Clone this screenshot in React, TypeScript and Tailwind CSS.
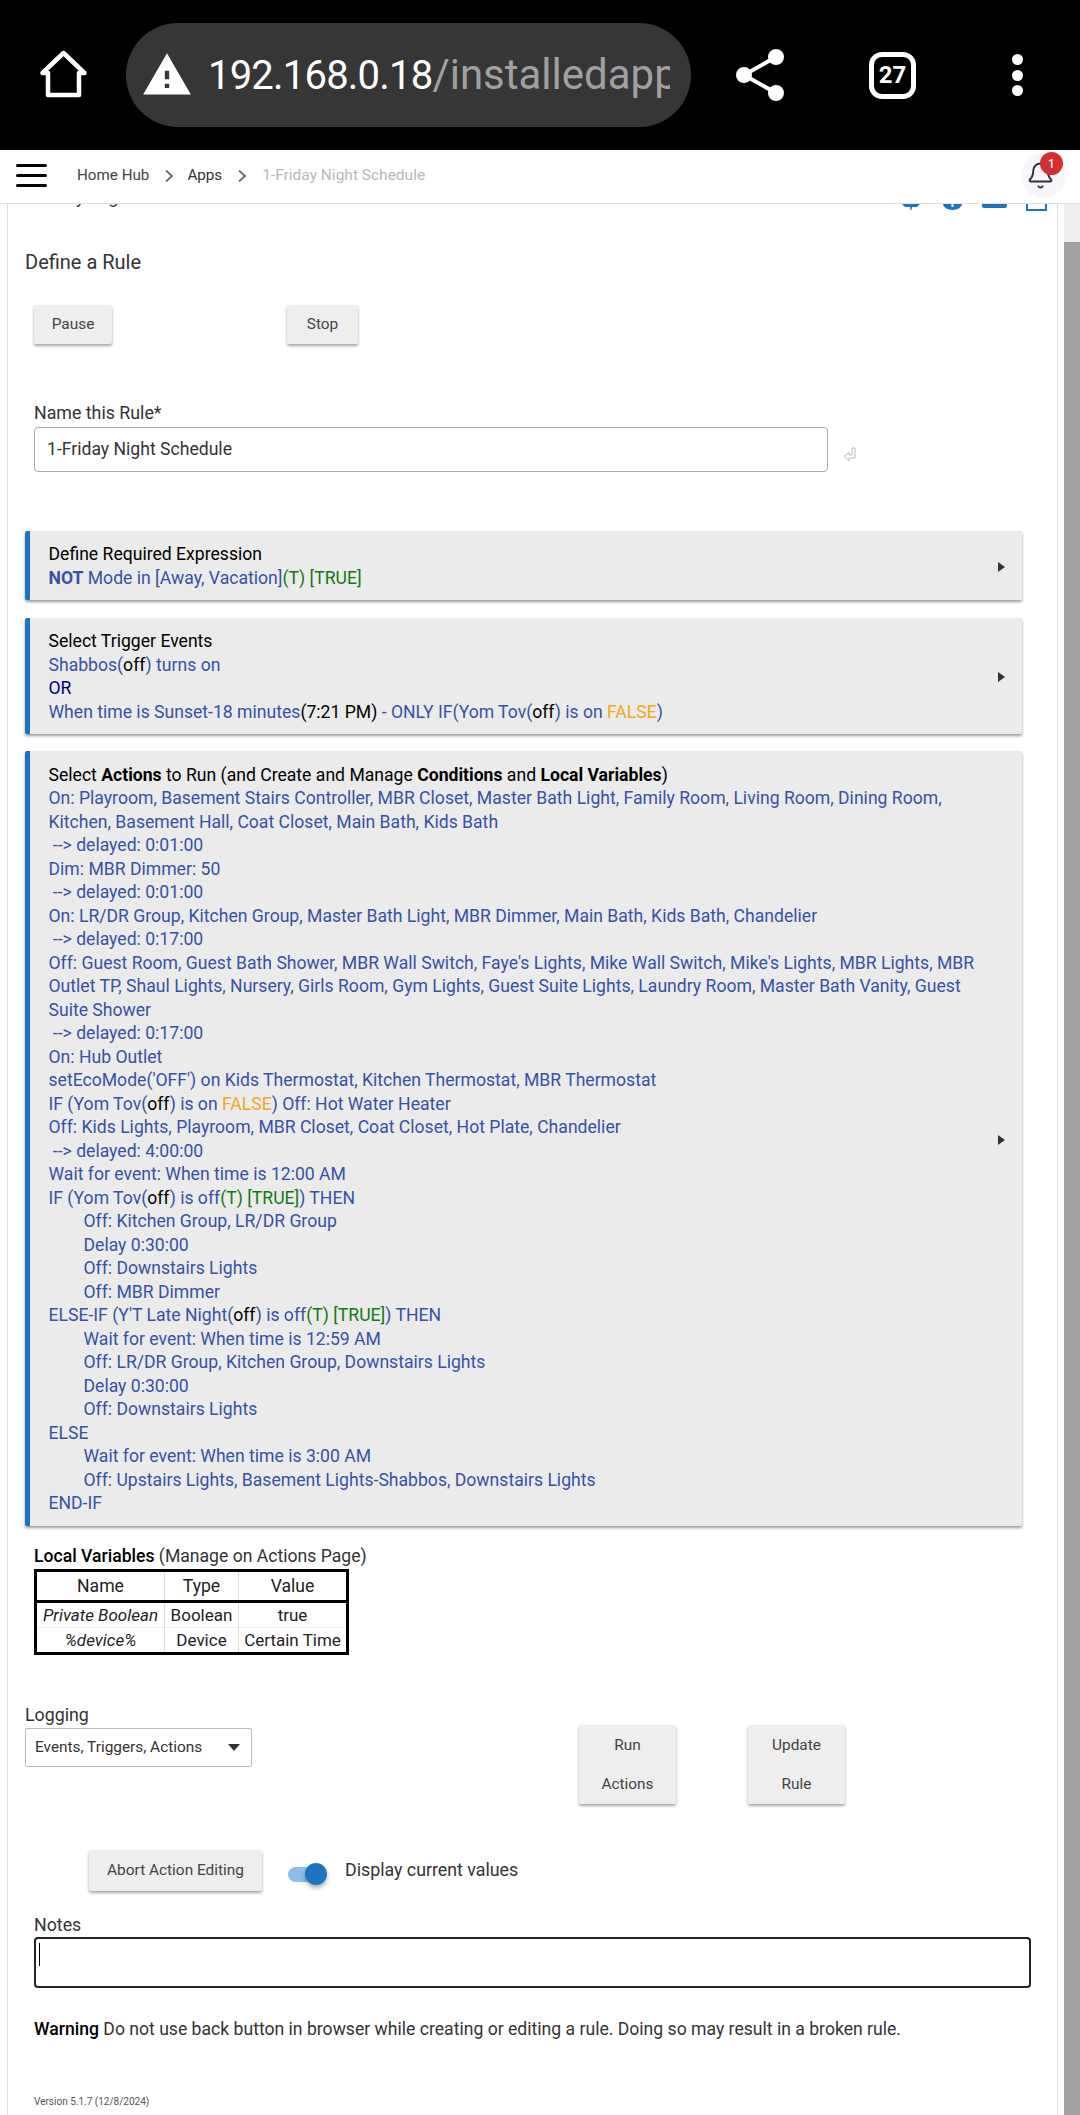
import React from 'react';
import { Bell } from 'lucide-react';

const Off = () => <span className="text-black">off</span>;
const T = ({ children }: { children: React.ReactNode }) => <span className="text-[#0f7a0f]">{children}</span>;
const False = () => <span className="text-[#f5a623]">FALSE</span>;

const actionLines: React.ReactNode[] = [
  'On: Playroom, Basement Stairs Controller, MBR Closet, Master Bath Light, Family Room, Living Room, Dining Room,',
  'Kitchen, Basement Hall, Coat Closet, Main Bath, Kids Bath',
  '\u00a0--> delayed: 0:01:00',
  'Dim: MBR Dimmer: 50',
  '\u00a0--> delayed: 0:01:00',
  'On: LR/DR Group, Kitchen Group, Master Bath Light, MBR Dimmer, Main Bath, Kids Bath, Chandelier',
  '\u00a0--> delayed: 0:17:00',
  "Off: Guest Room, Guest Bath Shower, MBR Wall Switch, Faye's Lights, Mike Wall Switch, Mike's Lights, MBR Lights, MBR",
  'Outlet TP, Shaul Lights, Nursery, Girls Room, Gym Lights, Guest Suite Lights, Laundry Room, Master Bath Vanity, Guest',
  'Suite Shower',
  '\u00a0--> delayed: 0:17:00',
  'On: Hub Outlet',
  "setEcoMode('OFF') on Kids Thermostat, Kitchen Thermostat, MBR Thermostat",
  <>IF (Yom Tov(<Off />) is on <False />) Off: Hot Water Heater</>,
  'Off: Kids Lights, Playroom, MBR Closet, Coat Closet, Hot Plate, Chandelier',
  '\u00a0--> delayed: 4:00:00',
  'Wait for event: When time is 12:00 AM',
  <>IF (Yom Tov(<Off />) is off<T>(T) [TRUE]</T>) THEN</>,
  <span className="pl-[35px]">Off: Kitchen Group, LR/DR Group</span>,
  <span className="pl-[35px]">Delay 0:30:00</span>,
  <span className="pl-[35px]">Off: Downstairs Lights</span>,
  <span className="pl-[35px]">Off: MBR Dimmer</span>,
  <>ELSE-IF (Y'T Late Night(<Off />) is off<T>(T) [TRUE]</T>) THEN</>,
  <span className="pl-[35px]">Wait for event: When time is 12:59 AM</span>,
  <span className="pl-[35px]">Off: LR/DR Group, Kitchen Group, Downstairs Lights</span>,
  <span className="pl-[35px]">Delay 0:30:00</span>,
  <span className="pl-[35px]">Off: Downstairs Lights</span>,
  'ELSE',
  <span className="pl-[35px]">Wait for event: When time is 3:00 AM</span>,
  <span className="pl-[35px]">Off: Upstairs Lights, Basement Lights-Shabbos, Downstairs Lights</span>,
  'END-IF',
];

function Panel({ title, lines, className }: { title: React.ReactNode; lines: React.ReactNode[]; className: string }) {
  return (
    <div className={`flex items-center justify-between bg-[#ebebeb] border-l-[5px] border-[#1f74c0] rounded-[2px] pl-[18.5px] pr-[17px] pt-[9px] pb-[7px] shadow-[0_2px_3px_rgba(0,0,0,0.4)] ${className}`}>
      <div className="text-[17.6px] leading-[23.5px] whitespace-nowrap text-[#3652a6]">
        <div className="text-black">{title}</div>
        {lines.map((l, i) => <div key={i}>{l}</div>)}
      </div>
      <div className="w-0 h-0 border-y-[5px] border-y-transparent border-l-[7px] border-l-[#333]" />
    </div>
  );
}

function Btn({ children, className }: { children: React.ReactNode; className: string }) {
  return (
    <div className={`flex items-center justify-center bg-[#eeeeee] rounded-[2px] text-[15.4px] text-[#444] shadow-[0_2px_3px_rgba(0,0,0,0.35)] ${className}`}>
      {children}
    </div>
  );
}

const Chevron = ({ className }: { className: string }) => (
  <svg viewBox="0 0 8 12" className={`w-[8px] h-[12px] ${className}`} fill="none" stroke="#666" strokeWidth="1.800"><path d="M1 .5 7 6l-6 5.500" /></svg>
);

export default function App() {
  return (
    <div className="w-[1080px] h-[2115px] overflow-hidden bg-white flex flex-col font-['Roboto',sans-serif]">
      {/* Browser chrome */}
      <div className="h-[150px] bg-black flex items-center shrink-0">
        <svg viewBox="0 0 58 58" className="w-[58px] h-[58px] ml-[34px] shrink-0" fill="none" stroke="#fff" strokeWidth="4.500" strokeLinejoin="round">
          <path d="M29.500 7 8.500 27H14v22h31V27h5.500z" />
        </svg>
        <div className="ml-[34px] w-[565px] h-[104px] rounded-full bg-[#363636] flex items-center overflow-hidden shrink-0 pl-[15px]">
          <svg viewBox="0 0 24 24" className="w-[52px] h-[52px] shrink-0" fill="#fff">
            <path d="M1 21h22L12 2 1 21zm12-3h-2v-2h2v2zm0-4h-2v-4h2v4z" />
          </svg>
          <div className="ml-[15px] w-[462px] overflow-hidden whitespace-nowrap text-[40px] tracking-[-0.8px] leading-[60px] text-white">
            192.168.0.18<span className="text-[42px] tracking-normal text-[#a0a0a0]">/installedapp</span>
          </div>
        </div>
        <svg viewBox="0 0 48 52" className="w-[48px] h-[52px] ml-[45px] shrink-0" fill="#fff" stroke="#fff" strokeWidth="4">
          <path d="M40 8 8 26l32 18" fill="none" />
          <circle cx="40" cy="8" r="6" />
          <circle cx="8" cy="26" r="6" />
          <circle cx="40" cy="44" r="6" />
        </svg>
        <div className="ml-[85px] w-[47px] h-[47px] rounded-[13px] border-[5px] border-white flex items-center justify-center text-white text-[24px] font-bold shrink-0">27</div>
        <div className="ml-[96px] flex flex-col gap-[4.500px] shrink-0">
          <div className="w-[11px] h-[11px] rounded-full bg-white" />
          <div className="w-[11px] h-[11px] rounded-full bg-white" />
          <div className="w-[11px] h-[11px] rounded-full bg-white" />
        </div>
      </div>

      {/* Breadcrumb header */}
      <div className="h-[54px] bg-white border-b border-[#e0e0e0] flex items-center shrink-0 text-[15.2px] pb-[2px] relative z-10">
        <div className="ml-[16px] w-[31px] flex flex-col gap-[7px]">
          <div className="h-[3px] rounded-full bg-black" />
          <div className="h-[3px] rounded-full bg-black" />
          <div className="h-[3px] rounded-full bg-black" />
        </div>
        <span className="ml-[30px] text-[#444]">Home Hub</span>
        <Chevron className="ml-[16px]" />
        <span className="ml-[14px] text-[#333]">Apps</span>
        <Chevron className="ml-[16px]" />
        <span className="ml-[16px] text-[15.5px] text-[#b8b8b8]">1-Friday Night Schedule</span>
        <div className="ml-auto mr-[14px] w-[45px] h-[45px] rounded-full bg-[#f7f7fb] flex items-center justify-center relative">
          <Bell className="w-[29px] h-[29px] mr-[6px] text-[#333]" strokeWidth={1.6} />
          <span className="absolute -top-[1px] right-[3px] w-[23px] h-[23px] rounded-full bg-[#d32f2f] text-white text-[12px] font-medium flex items-center justify-center">1</span>
        </div>
      </div>

      {/* Page */}
      <div className="flex-1 flex min-h-0">
        <div className="ml-[7px] w-[1051px] bg-white border-x border-[#dcdcdc] flex flex-col">
          {/* Title row, nearly scrolled away under the header */}
          <div className="h-[7px] overflow-hidden flex items-end justify-between pl-[9px] pr-[10px] shrink-0">
            <span className="text-[19.2px] leading-[29px] text-[#444] whitespace-nowrap">1-Friday Night Schedule</span>
            <div className="flex items-start self-start">
              <svg viewBox="0 0 18 6" className="w-[18px] h-[6px]" fill="#1f74c0"><path d="M0 0h18l-3 3h-5L9.500 6h-1L8 3H3z" /></svg>
              <svg viewBox="0 0 19 6" className="ml-[23px] w-[19px] h-[6px]" fill="#1f74c0"><path d="M0 0h8.500v3h2V0H19a9.500 6 0 0 1-19 0z" /></svg>
              <div className="ml-[20px] w-[25px] h-[4px] bg-[#1f74c0] rounded-b-[2px]" />
              <div className="ml-[19px] w-[21px] h-[7px] border-x-2 border-b-2 border-[#1f74c0]" />
            </div>
          </div>

          <div className="mt-[38px] ml-[17px] text-[20px] leading-[26px] text-[#333]">Define a Rule</div>

          <div className="mt-[30px] ml-[26px] flex">
            <Btn className="w-[78px] h-[39px]">Pause</Btn>
            <Btn className="ml-[175px] w-[71px] h-[39px]">Stop</Btn>
          </div>

          <div className="mt-[58px] ml-[26px] text-[17.8px] leading-[22px] text-[#333]">Name this Rule*</div>
          <div className="mt-[3px] ml-[26px] flex items-center">
            <div className="w-[794px] h-[45px] border border-[#aaa] rounded-[4px] flex items-center pl-[12px] text-[17.6px] text-[#333]">1-Friday Night Schedule</div>
            <svg viewBox="0 0 13 14" className="ml-[15px] mt-[8px] w-[13px] h-[14px]" fill="none" stroke="#bbb" strokeWidth="1"><path d="M1 9.500 6 5.500v2.500h3V1h3v10H6v2.500z" /></svg>
          </div>

          <div className="ml-[17px] w-[997px] mt-[59px]">
            <Panel className="h-[69px]" title="Define Required Expression" lines={[
              <><b className="font-bold">NOT</b> Mode in [Away, Vacation]<T>(T) [TRUE]</T></>,
            ]} />
            <Panel className="mt-[18px] h-[116px]" title="Select Trigger Events" lines={[
              <>Shabbos(<Off />) turns on</>,
              <span className="text-[#000080]">OR</span>,
              <>When time is Sunset-18 minutes<span className="text-black">(7:21 PM)</span> - ONLY IF(Yom Tov(<Off />) is on <False />)</>,
            ]} />
            <Panel className="mt-[17px] h-[775px]" title={<>Select <b className="font-bold">Actions</b> to Run (and Create and Manage <b className="font-bold">Conditions</b> and <b className="font-bold">Local Variables</b>)</>} lines={actionLines} />
          </div>

          <div className="mt-[19px] ml-[26px] text-[17.6px] leading-[22px] text-[#333]"><b className="font-medium text-black">Local Variables</b> (Manage on Actions Page)</div>
          <table className="mt-[2px] ml-[26px] w-[315px] border-collapse border-[3px] border-black text-center text-[17px] leading-[22px] text-[#222] table-fixed">
            <thead>
              <tr className="h-[31px] border-b-[3px] border-black text-[17.6px]">
                <th className="w-[129px] font-normal border-r border-[#ddd]">Name</th>
                <th className="w-[74px] font-normal border-r border-[#ddd]">Type</th>
                <th className="font-normal">Value</th>
              </tr>
            </thead>
            <tbody>
              <tr className="h-[26px] border-b border-[#eee]">
                <td className="italic border-r border-[#ddd] whitespace-nowrap">Private Boolean</td>
                <td className="border-r border-[#ddd]">Boolean</td>
                <td>true</td>
              </tr>
              <tr className="h-[26px]">
                <td className="italic border-r border-[#ddd]">%device%</td>
                <td className="border-r border-[#ddd]">Device</td>
                <td className="whitespace-nowrap">Certain Time</td>
              </tr>
            </tbody>
          </table>

          <div className="mt-[49px] flex">
            <div className="ml-[17px] w-[227px]">
              <div className="text-[17.8px] leading-[22px] text-[#333]">Logging</div>
              <div className="mt-[2px] h-[39px] border border-[#bbb] rounded-[2px] flex items-center justify-between pl-[9px] pr-[11px] text-[15.4px] text-[#333] whitespace-nowrap">
                Events, Triggers, Actions
                <div className="w-0 h-0 border-x-[6px] border-x-transparent border-t-[7px] border-t-[#333]" />
              </div>
            </div>
            <Btn className="ml-[327px] mt-[21px] w-[97px] h-[79px] leading-[39px] text-center">Run<br />Actions</Btn>
            <Btn className="ml-[72px] mt-[21px] w-[97px] h-[79px] leading-[39px] text-center">Update<br />Rule</Btn>
          </div>

          <div className="mt-[46px] flex items-start">
            <Btn className="ml-[81px] w-[173px] h-[41px]">Abort Action Editing</Btn>
            <div className="ml-[26px] mt-[13px] w-[39px] h-[22px] relative flex items-center">
              <div className="w-[30px] h-[15px] rounded-full bg-[#8fbce8]" />
              <div className="absolute right-0 top-0 w-[22px] h-[22px] rounded-full bg-[#1f74c0] shadow-[0_3px_4px_rgba(0,0,0,0.3)]" />
            </div>
            <span className="ml-[18px] mt-[8px] text-[17.8px] leading-[24px] text-[#333]">Display current values</span>
          </div>

          <div className="mt-[23px] ml-[26px] text-[17.8px] leading-[22px] text-[#333]">Notes</div>
          <div className="mt-[1px] ml-[26px] w-[997px] h-[51px] border-2 border-[#222] rounded-[4px] pl-[3px] pt-[4px]">
            <div className="w-px h-[23px] bg-black" />
          </div>

          <div className="mt-[29px] ml-[26px] text-[17.6px] leading-[24px] text-[#333] whitespace-nowrap"><b className="font-medium text-black">Warning</b> Do not use back button in browser while creating or editing a rule. Doing so may result in a broken rule.</div>

          <div className="mt-[54px] ml-[26px] text-[10px] leading-[14px] text-[#555]">Version 5.1.7 (12/8/2024)</div>
        </div>

        {/* Scrollbar */}
        <div className="ml-[6px] w-[16px] flex flex-col bg-[#f1f1f1]">
          <div className="h-[38px] bg-[#efefef]" />
          <div className="flex-1 bg-[#a3a3a3]" />
        </div>
      </div>
    </div>
  );
}
